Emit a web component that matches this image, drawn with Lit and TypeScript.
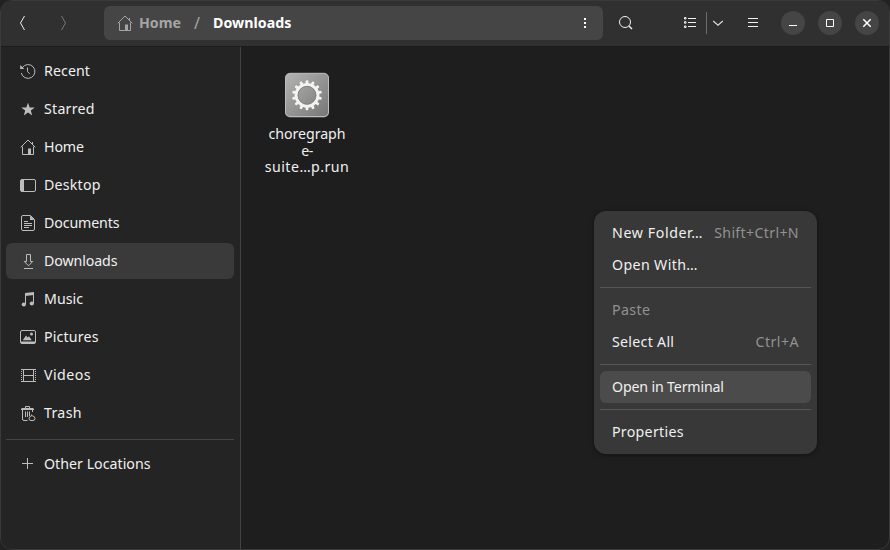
import { LitElement, html, css, svg } from "lit";
import { customElement, property } from "lit/decorators.js";
import { classMap } from "lit/directives/class-map.js";

/** One line of text that is spaced to fill a fixed advance width. */
@customElement("fit-text")
class FitText extends LitElement {
  @property() text = "";
  @property({ type: Number }) width = 0;

  static styles = css`
    :host { display: inline-block; white-space: pre; text-align: left; }
    .run { display: inline-block; }
  `;

  firstUpdated() {
    const run = this.renderRoot.querySelector<HTMLElement>(".run")!;
    const natural = run.getBoundingClientRect().width;
    const gaps = Math.max(1, this.text.length - 1);
    run.style.letterSpacing = `${(this.width - natural) / gaps}px`;
  }

  render() {
    return html`<span class="run">${this.text}</span>`;
  }
}

const icons: Record<string, unknown> = {
  home: svg`<path d="M.7 8.300 8 1l7.300 7.300M2.500 7.500v8H9M13.500 7.500v8H11M12.500 3v2"/><path class="fill" d="M8 9.500h3V16H8z"/>`,
  recent: svg`<path d="M2.300 4.600A6.900 6.900 0 1 1 1.300 10M7.500 4.500v4l2.200 2.300"/><path class="fill" d="M.2 1.900v4h4.200z"/>`,
  starred: svg`<path class="fill" d="m8 1.700 1.700 4.700h5.100l-4 3.100 1.400 4.900L8 11.500l-4.200 2.900 1.400-4.900-4-3.100h5.100z"/>`,
  desktop: svg`<rect x=".5" y="2.500" width="15" height="12" rx="1.500"/><path class="fill" d="M1 2.500h3v12H1z"/>`,
  documents: svg`<path d="M3 .5h7.500l4 4V14q0 1.500-1.500 1.500H3q-1.500 0-1.500-1.500V2Q1.500.5 3 .5zM4 6.500h4M4 8.500h8M4 10.500h8M4 12.500h5"/><path class="fill" d="M10 .5v4.500h4.500z"/>`,
  downloads: svg`<path d="M6.500 1.500h4v7h2.200L8.500 12.800 4.300 8.500h2.200zM4 15.500h9"/>`,
  music: svg`<path d="M5.500 13V2.500M13.500 12V2"/><path class="fill" d="M5 2l9-1v3L5 5z"/><circle class="fill" cx="3.800" cy="13.500" r="2.100"/><circle class="fill" cx="11.800" cy="12.500" r="2.100"/>`,
  pictures: svg`<rect x=".5" y="1.500" width="15" height="13" rx="1.500"/><path class="fill" d="M1 12.500h14v2H1zM2.800 11.200 6 6.500l1.700 2 1.300-1.200 2.800 3.900z"/><circle class="fill" cx="11.500" cy="5" r="1.500"/>`,
  videos: svg`<path d="M3.500 2v13M13.500 2v13M1 2.500h15M3.500 8.500h10M1 14.500h15"/><path class="dots" d="M1.500 2v13M15.500 2v13"/>`,
  trash: svg`<path d="M1 4.500h13M5.500 4V1.500h4V4M2.500 5v9q0 1.500 1.500 1.500h3.500M12.500 5v2M5.500 6.500V12M7.500 6.500V12M9.500 6.500V11"/><path class="fill" d="M1.500 3h12v1.500h-12z"/><path d="M11.500 9.500v1.300M9 13.500q0-2 2.500-2.700h1q2.500.7 2.500 2.700t-2 2h-2q-2 0-2-2z"/>`,
  plus: svg`<path d="M7.500 2v11M2 7.500h11"/>`,
  back: svg`<path d="M9.500 1 5.500 8l4 7"/>`,
  forward: svg`<path d="M6.500 1l4 7-4 7"/>`,
  kebab: svg`<path class="fill" d="M7 3h2v2H7zM7 7h2v2H7zM7 11h2v2H7z"/>`,
  search: svg`<circle cx="7" cy="7" r="5.500"/><path class="bold" d="m11 11 3 3"/>`,
  list: svg`<path d="M6 3.500h8M6 7.500h8M6 11.500h8M2.500 2.500h1.500v1.500H2.500zM2.500 6.700h1.500v1.500H2.500zM2.500 11h1.500v1.500H2.500z"/>`,
  chevron: svg`<path class="medium" d="M3.200 6 8 10.200 12.800 6"/>`,
  menu: svg`<path d="M3 3.500h10M3 7.500h10M3 11.500h10"/>`,
  minimize: svg`<path d="M4 10.500h8"/>`,
  maximize: svg`<path d="M4.500 4.500h7v7h-7z"/>`,
  close: svg`<path class="bold" d="M4.300 4.300l7.400 7.400M11.700 4.300l-7.400 7.400"/>`,
};

@customElement("line-icon")
class LineIcon extends LitElement {
  @property() name = "";

  static styles = css`
    :host { display: block; width: 16px; height: 16px; flex: none; }
    svg { display: block; fill: none; stroke: currentColor; stroke-width: 1; }
    .fill { fill: currentColor; stroke: none; }
    .bold { stroke-width: 1.5; }
    .medium { stroke-width: 1.2; }
    .dots { stroke-dasharray: 1 1; }
  `;

  render() {
    return html`<svg width="16" height="16" viewBox="0 0 16 16">${icons[this.name]}</svg>`;
  }
}

type Place = { icon: string; label: string; width: number };
type Entry = { label: string; width: number; keys?: string; keysWidth?: number; disabled?: boolean; active?: boolean };

const places: Place[] = [
  { icon: "recent", label: "Recent", width: 46 },
  { icon: "starred", label: "Starred", width: 50.5 },
  { icon: "home", label: "Home", width: 40 },
  { icon: "desktop", label: "Desktop", width: 56.5 },
  { icon: "documents", label: "Documents", width: 75.5 },
  { icon: "downloads", label: "Downloads", width: 73.5 },
  { icon: "music", label: "Music", width: 39 },
  { icon: "pictures", label: "Pictures", width: 54.5 },
  { icon: "videos", label: "Videos", width: 46.5 },
  { icon: "trash", label: "Trash", width: 37.5 },
];

const groups: Entry[][] = [
  [
    { label: "New Folder…", width: 90.5, keys: "Shift+Ctrl+N", keysWidth: 84.5 },
    { label: "Open With…", width: 85.5 },
  ],
  [
    { label: "Paste", width: 38, disabled: true },
    { label: "Select All", width: 62, keys: "Ctrl+A", keysWidth: 43 },
  ],
  [{ label: "Open in Terminal", width: 112, active: true }],
  [{ label: "Properties", width: 71.5 }],
];

const fileLines = [
  { text: "choregraph", width: 77 },
  { text: "e-", width: 12 },
  { text: "suite…p.run", width: 84 },
];

const teeth = Array.from({ length: 14 }, (_, i) => (i * 360) / 14);

@customElement("app-root")
class AppRoot extends LitElement {
  static styles = css`
    :host {
      display: block; width: 890px; height: 550px; background: #222;
      font: 14.2px/16px "Noto Sans", "Open Sans", sans-serif; color: #f0f0f0;
    }
    * { box-sizing: border-box; }
    .window {
      width: 890px; height: 550px; border: 1px solid #3a3a3a; border-radius: 12px;
      overflow: hidden; display: flex; flex-direction: column; background: #1e1e1e;
    }
    .header {
      height: 46px; flex: none; background: #303030; border-bottom: 1px solid #1c1b1b;
      display: flex; align-items: center; padding: 0 10px 1px 14px;
    }
    .forward { margin-left: 24px; color: #777; }
    .path {
      width: 499px; height: 34px; margin-left: 33px; padding: 0 10px 0 13px; border-radius: 6px;
      background: #454545; display: flex; align-items: center; font-weight: 700; color: #a5a5a5;
    }
    .path .crumb { margin-left: 6px; }
    .path .slash { width: 7px; margin-left: 13px; font-weight: 400; font-size: 16px; }
    .path .current { margin-left: 12px; color: #fff; }
    .path .kebab { margin-left: auto; color: #fff; }
    .search { margin-left: 15px; }
    .list { margin-left: 48px; }
    .split { width: 1px; height: 22px; background: #6b6b6b; margin-left: 8px; }
    .chevron { margin-left: 3px; color: #ddd; }
    .menu-button { margin-left: 19px; }
    .round {
      width: 24px; height: 24px; margin-left: 13px; border-radius: 50%; background: #454545;
      display: grid; place-items: center; color: #fff;
    }
    .round.first { margin-left: 20px; }
    .body { flex: 1; display: flex; min-height: 0; }
    .sidebar {
      width: 240px; background: #242424; border-right: 1px solid #444; padding: 6px 6px 0 5px;
    }
    .place {
      height: 36px; margin-bottom: 2px; border-radius: 6px; padding-left: 14px;
      display: flex; align-items: center; gap: 8px;
    }
    .place line-icon { color: #bdbdbd; }
    .place.selected { background: #3a3a3a; }
    .rule { height: 1px; background: #444; margin: 8px 0 6px; }
    .content { flex: 1; padding: 24px; }
    .file { width: 84px; display: flex; flex-direction: column; align-items: center; }
    .file svg { display: block; }
    .name { margin-top: 7px; display: flex; flex-direction: column; align-items: center; line-height: 16.6px; }
    .popup {
      position: absolute; left: 594px; top: 211px; width: 223px; height: 243px; padding: 6px;
      border-radius: 12px; background: #383838; box-shadow: 0 1px 5px rgba(0, 0, 0, .4);
    }
    .entry {
      height: 32px; padding: 0 12px; border-radius: 6px; display: flex;
      align-items: center; justify-content: space-between;
    }
    .entry.disabled, .keys { color: #929292; }
    .entry.active { background: #4b4b4b; }
    .group + .group { border-top: 1px solid #555; margin-top: 6px; padding-top: 6px; }
  `;

  private place(p: Place) {
    return html`<div class=${classMap({ place: true, selected: p.label === "Downloads" })}>
      <line-icon name=${p.icon}></line-icon><fit-text .text=${p.label} .width=${p.width}></fit-text>
    </div>`;
  }

  private entry(e: Entry) {
    return html`<div class=${classMap({ entry: true, disabled: !!e.disabled, active: !!e.active })}>
      <fit-text .text=${e.label} .width=${e.width}></fit-text>
      ${e.keys ? html`<fit-text class="keys" .text=${e.keys} .width=${e.keysWidth}></fit-text>` : null}
    </div>`;
  }

  render() {
    return html`
      <div class="window">
        <div class="header">
          <line-icon name="back"></line-icon>
          <line-icon class="forward" name="forward"></line-icon>
          <div class="path">
            <line-icon name="home"></line-icon>
            <fit-text class="crumb" .text=${"Home"} .width=${42}></fit-text>
            <span class="slash">/</span>
            <fit-text class="current" .text=${"Downloads"} .width=${78.5}></fit-text>
            <line-icon class="kebab" name="kebab"></line-icon>
          </div>
          <line-icon class="search" name="search"></line-icon>
          <line-icon class="list" name="list"></line-icon>
          <span class="split"></span>
          <line-icon class="chevron" name="chevron"></line-icon>
          <line-icon class="menu-button" name="menu"></line-icon>
          <span class="round first"><line-icon name="minimize"></line-icon></span>
          <span class="round"><line-icon name="maximize"></line-icon></span>
          <span class="round"><line-icon name="close"></line-icon></span>
        </div>
        <div class="body">
          <div class="sidebar">
            ${places.map((p) => this.place(p))}
            <div class="rule"></div>
            ${this.place({ icon: "plus", label: "Other Locations", width: 106.5 })}
          </div>
          <div class="content">
            <div class="file">
              <svg width="48" height="48" viewBox="0 0 48 48">
                <defs>
                  <linearGradient id="face" x1="0" y1="0" x2="1" y2="1">
                    <stop offset="0" stop-color="#b4b4b4" /><stop offset="1" stop-color="#767676" />
                  </linearGradient>
                </defs>
                <rect x="2" y="2.500" width="44" height="44" rx="5" fill="#777" />
                <rect x="2.500" y="2.300" width="43" height="43.200" rx="4.500" fill="url(#face)" stroke="#bcbcbc" />
                <circle cx="24" cy="24.300" r="10.800" fill="none" stroke="#f4f3f0" stroke-width="3.200" />
                ${teeth.map((a) => svg`<rect x="22.600" y="9.300" width="2.800" height="4.500" rx="1" fill="#f4f3f0" transform=${`rotate(${a} 24 24.3)`} />`)}
                <circle cx="24" cy="24.300" r="9" fill="none" stroke="#777" stroke-width=".8" />
              </svg>
              <div class="name">
                ${fileLines.map((l) => html`<fit-text .text=${l.text} .width=${l.width}></fit-text>`)}
              </div>
            </div>
          </div>
        </div>
      </div>
      <div class="popup">
        ${groups.map((g) => html`<div class="group">${g.map((e) => this.entry(e))}</div>`)}
      </div>
    `;
  }
}
